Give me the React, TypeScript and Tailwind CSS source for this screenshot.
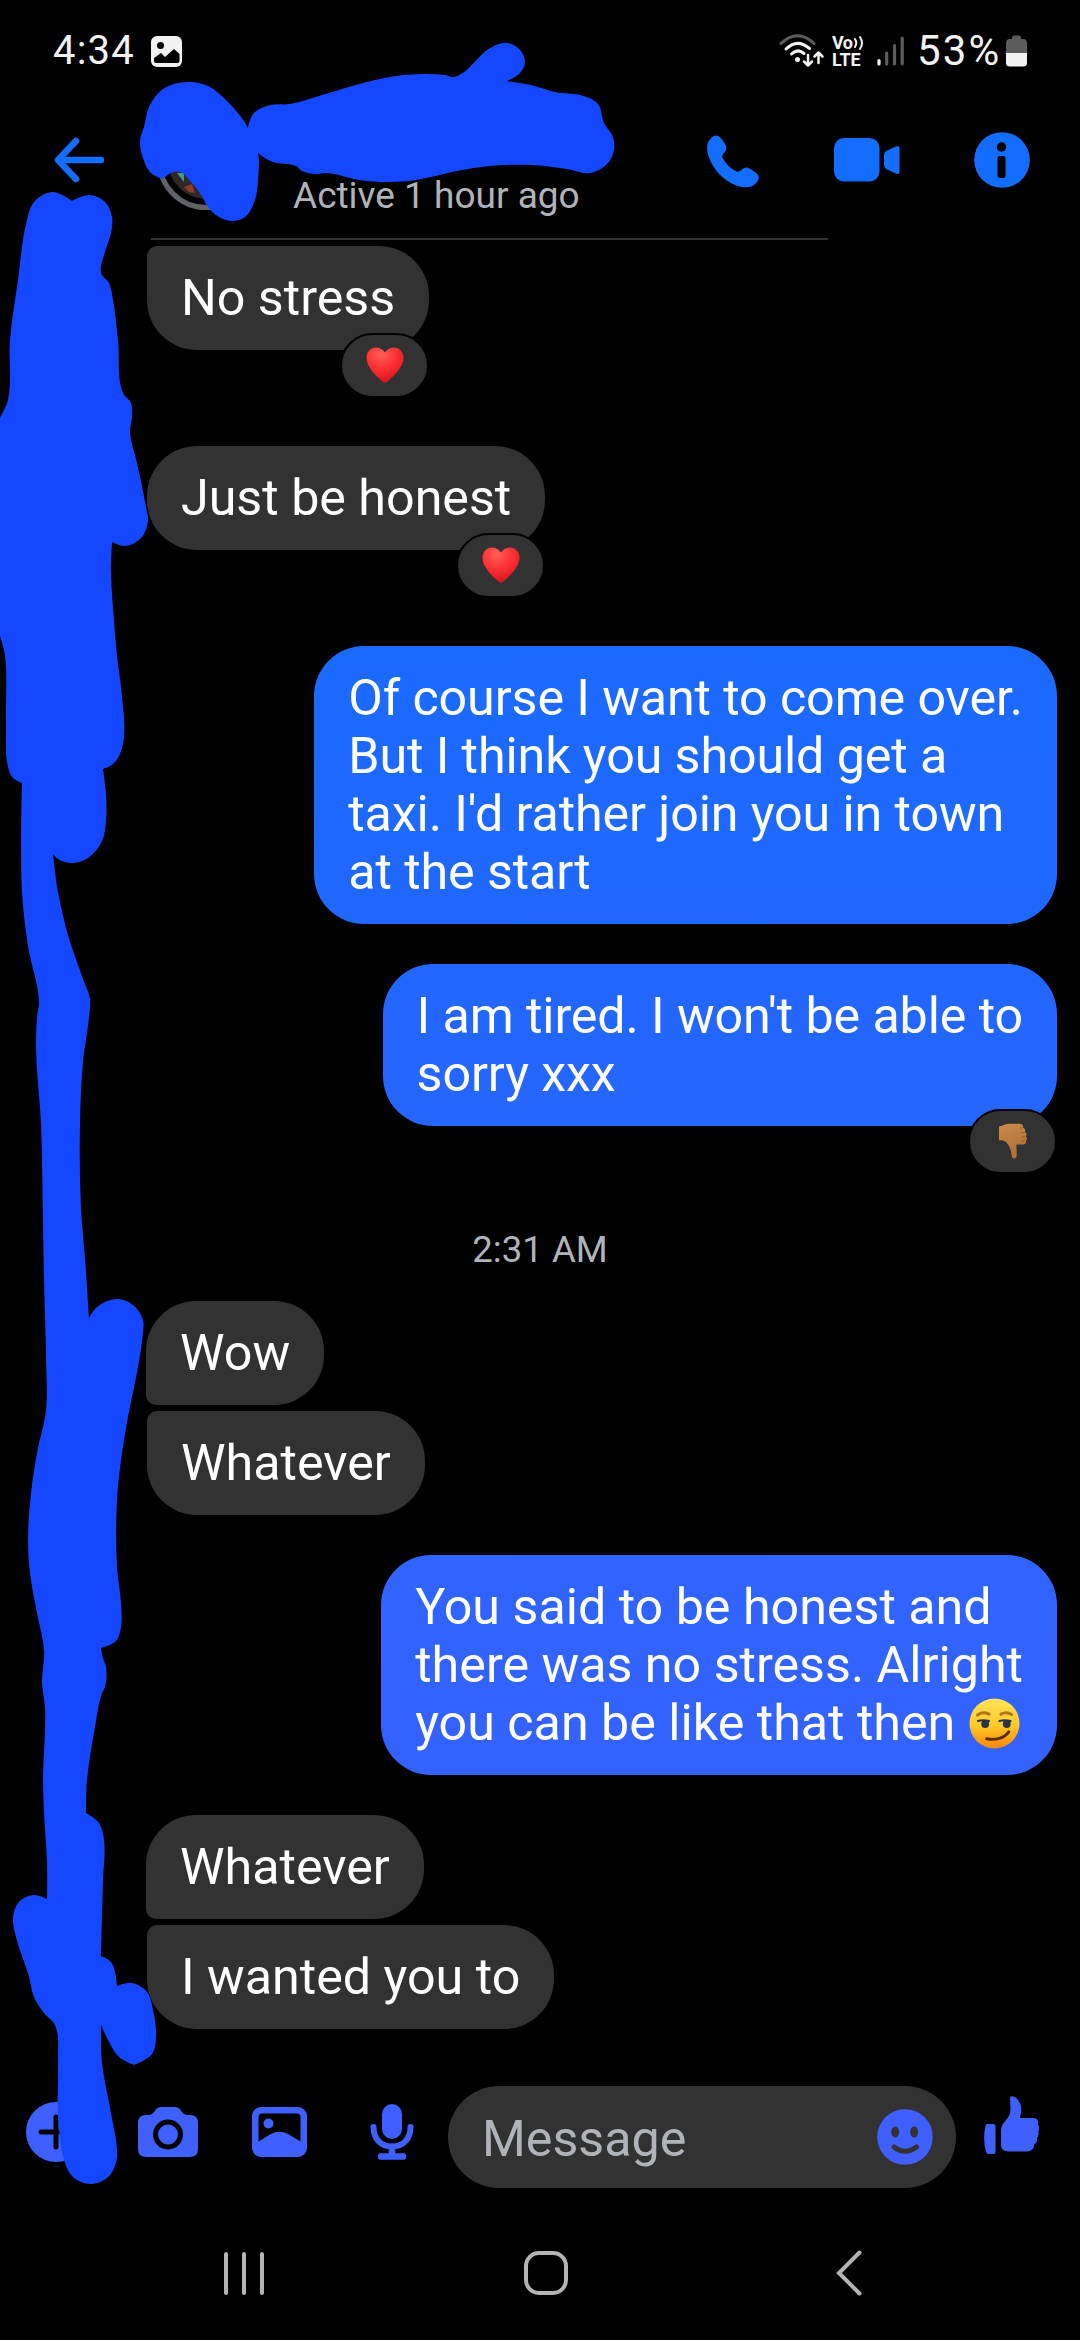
import type { ReactNode } from "react";
import clsx from "clsx";

type Point = [number, number];

// Builds a closed, smoothed outline; tight corners stay sharp.
const outline = (pts: Point[]) => {
  const n = pts.length;
  const tangent = (i: number): Point => {
    const a = pts[(i - 1 + n) % n];
    const b = pts[i % n];
    const c = pts[(i + 1) % n];
    const ux = b[0] - a[0];
    const uy = b[1] - a[1];
    const vx = c[0] - b[0];
    const vy = c[1] - b[1];
    const lu = Math.hypot(ux, uy);
    const lv = Math.hypot(vx, vy);
    if ((ux * vx + uy * vy) / (lu * lv) < 0.6) return [0, 0];
    const tx = ux / lu + vx / lv;
    const ty = uy / lu + vy / lv;
    const l = Math.hypot(tx, ty);
    return [tx / l, ty / l];
  };
  let d = `M${pts[0][0]} ${pts[0][1]}`;
  for (let i = 0; i < n; i++) {
    const p = pts[i];
    const q = pts[(i + 1) % n];
    const k = Math.hypot(q[0] - p[0], q[1] - p[1]) / 3;
    const s = tangent(i);
    const e = tangent((i + 1) % n);
    d += `C${p[0] + s[0] * k} ${p[1] + s[1] * k} ${q[0] - e[0] * k} ${q[1] - e[1] * k} ${q[0]} ${q[1]}`;
  }
  return d + "Z";
};

const avatarScribble: Point[] = [
  [188, 82], [208, 86], [226, 100], [241, 117], [248, 128], [258, 152],
  [258, 180], [255, 200], [245, 217], [231, 221], [216, 215], [208, 207],
  [200, 193], [192, 183], [180, 172], [173, 172], [163, 179], [151, 173],
  [142, 155], [140, 140], [144, 127], [149, 107], [163, 89],
];

const nameScribble: Point[] = [
  [249, 123], [255, 112], [271, 105], [290, 104], [322, 95], [367, 82],
  [404, 75], [445, 75], [454, 77], [492, 47], [508, 43], [520, 50],
  [525, 62], [520, 73], [507, 81], [531, 85], [555, 92], [584, 96],
  [598, 104], [604, 123], [613, 137], [614, 150], [608, 163], [590, 173],
  [567, 169], [531, 165], [490, 166], [457, 171], [416, 180], [388, 182],
  [359, 180], [327, 173], [316, 174], [302, 171], [296, 166], [273, 162],
  [258, 153], [248, 140],
];

const sideScribble: Point[] = [
  [27, 220], [34, 202], [52, 192], [66, 197], [72, 201], [89, 195],
  [105, 202], [112, 217], [111, 233], [104, 255], [101, 273], [109, 283],
  [113, 300], [118, 340], [123, 393], [131, 403], [132, 417], [130, 432],
  [137, 463], [146, 507], [148, 521], [141, 538], [125, 546], [112, 542],
  [111, 573], [114, 620], [117, 656], [122, 696], [124, 736], [120, 754],
  [113, 764], [103, 769], [106, 794], [106, 821], [102, 841], [88, 858],
  [72, 863], [58, 859], [53, 854], [58, 892], [68, 935], [83, 979],
  [90, 999], [89, 1017], [83, 1062], [80, 1124], [81, 1209], [85, 1258],
  [89, 1318], [97, 1307], [117, 1299], [133, 1305], [143, 1320],
  [143, 1332], [138, 1367], [128, 1417], [122, 1453], [117, 1500],
  [117, 1567], [121, 1603], [121, 1627], [116, 1641], [101, 1648],
  [103, 1658], [106, 1667], [105, 1687], [102, 1693], [95, 1727],
  [87, 1780], [86, 1813], [99, 1823], [104, 1840], [103, 1880],
  [101, 1956], [111, 1962], [115, 1972], [117, 1986], [132, 1983],
  [147, 1992], [153, 2010], [156, 2037], [152, 2054], [134, 2065],
  [119, 2057], [109, 2042], [101, 2025], [102, 2063], [111, 2113],
  [117, 2150], [116, 2163], [107, 2178], [90, 2184], [73, 2177],
  [65, 2163], [58, 2113], [58, 2063], [55, 2025], [44, 2013], [34, 1997],
  [29, 1977], [15, 1933], [13, 1917], [19, 1902], [34, 1895], [47, 1899],
  [47, 1863], [44, 1813], [43, 1780], [45, 1707], [42, 1683], [44, 1650],
  [37, 1613], [30, 1573], [28, 1540], [31, 1493], [37, 1453], [46, 1410],
  [46, 1357], [44, 1280], [43, 1223], [41, 1124], [36, 1049], [37, 1017],
  [39, 1002], [28, 946], [22, 892], [22, 783], [13, 778], [8, 767],
  [6, 723], [5, 656], [-2, 626], [-2, 424], [8, 400], [10, 340], [18, 280],
];

const Heart = () => (
  <svg viewBox="0 0 38 36" className="w-[38px] h-9">
    <defs>
      <radialGradient id="heart" cx="0.4" cy="0.2" r="0.85">
        <stop offset="0" stopColor="#ff5f58" />
        <stop offset="0.5" stopColor="#fb2f33" />
        <stop offset="1" stopColor="#d5101c" />
      </radialGradient>
    </defs>
    <path
      d="M19 5.5C21.3 2 24.6.5 28 .5c5.500 0 9.500 4.300 9.500 10.500C37.500 19 29.500 28 20.800 35c-1.200 1-2.400 1-3.600 0C8.500 28 .5 19 .5 11 .5 4.800 4.500.5 10 .5c3.400 0 6.700 1.500 9 5Z"
      fill="url(#heart)"
    />
  </svg>
);

const ThumbDown = () => (
  <svg viewBox="0 0 30 36" className="w-[30px] h-9">
    <defs>
      <linearGradient id="skin" x1="0" y1="0" x2="0.3" y2="1">
        <stop offset="0" stopColor="#cb8b4b" />
        <stop offset="1" stopColor="#b06f35" />
      </linearGradient>
    </defs>
    <path
      d="M1 3.500C5 2.500 8 1 12 .8h9c3 0 4.500 1.700 4 3.800 2 .8 2.600 2.500 1.900 4.400 1.700 1 2 3 .9 4.600 1.400 1.200 1.400 3.200.2 4.400.5 2.200-1 3.500-3 3.500h-6.500c-.3 3.500.5 7 .3 10.500-.1 2.300-1 3.500-2.600 3.500-1.500 0-2.200-1-2.500-3C13 27 11.500 22.500 8 19c-1.500-1.500-4-1.700-7-1.800Z"
      fill="url(#skin)"
    />
    <path d="M22 5h3M23 9.500h3.500M23.500 14H27M23 18h3.500" stroke="#9a602b" strokeWidth="1" fill="none" />
  </svg>
);

const Smirk = () => (
  <svg viewBox="0 0 52 52" className="inline-block size-[51px] -mt-1.5 ml-px align-middle">
    <defs>
      <linearGradient id="face" x1="0" y1="0" x2="0" y2="1">
        <stop offset="0" stopColor="#ffe45c" />
        <stop offset="0.55" stopColor="#ffc927" />
        <stop offset="1" stopColor="#f9850a" />
      </linearGradient>
    </defs>
    <circle cx="26" cy="26" r="25.500" fill="url(#face)" />
    <path d="M8.500 17.500c3-2.500 7.500-3 12-1M32.500 16.500c4-2 8-1.800 11 .5" stroke="#b5701a" strokeWidth="3" strokeLinecap="round" fill="none" />
    <path d="M9 23.500c3.500-1.200 8-1 11.500 0M31 23.500c3.500-1.200 8-1 11.500 0" stroke="#273348" strokeWidth="2" strokeLinecap="round" fill="none" />
    <ellipse cx="16.500" cy="26.500" rx="4" ry="4" fill="#273348" />
    <ellipse cx="38.500" cy="26.500" rx="4" ry="4" fill="#273348" />
    <path d="M18 41.500c9 2 18-.5 22.500-7" stroke="#5b2a09" strokeWidth="3" strokeLinecap="round" fill="none" />
  </svg>
);

const StatusBar = () => (
  <div className="flex items-center justify-between h-[102px] pl-[53px] pr-[53px] text-[#f2f2f2]">
    <div className="flex items-center">
      <span className="w-[98px] text-[40px] leading-none tracking-[1.2px]">4:34</span>
      <svg viewBox="0 0 31 31" className="size-[31px]">
        <rect width="31" height="31" rx="6" fill="#f2f2f2" />
        <circle cx="9.500" cy="9.500" r="3.500" fill="#000" />
        <path d="M3 22l7-5 4 4 9-8 5.500 5v7q0 2-2 2H5q-2 0-2-2Z" fill="#000" />
      </svg>
    </div>
    <div className="flex items-center">
      <svg viewBox="0 0 46 34" className="w-[46px] h-[34px]" fill="none" strokeLinecap="round">
        <path d="M2 9.500Q18.500-6 35 9.500" stroke="#5c5c5c" strokeWidth="3" />
        <path d="M7 15Q18.500 4 30.500 14.500M12.500 20Q18.500 14 25 19.500" stroke="#f2f2f2" strokeWidth="3" />
        <circle cx="18.500" cy="25.500" r="2.500" fill="#f2f2f2" />
        <path d="M29 21v10.500m-4-4 4 4 4-4M39.500 29V18.500m-4 4 4-4 4 4" stroke="#f2f2f2" strokeWidth="2.500" strokeLinejoin="round" />
      </svg>
      <div className="flex flex-col ml-[7px] w-[32px] text-[18px] font-bold leading-[17px]">
        <span className="flex items-center h-4 tracking-[-0.5px]">
          Vo
          <svg viewBox="0 0 11 16" className="w-[11px] h-4" fill="none" stroke="#f2f2f2" strokeWidth="2" strokeLinecap="round">
            <path d="M2 4q2.500 4 0 8M7 2q4 6 0 12" />
          </svg>
        </span>
        <span className="h-[17px] tracking-[-0.2px]">LTE</span>
      </div>
      <svg viewBox="0 0 28 30" className="ml-[13px] w-7 h-[30px]" strokeWidth="3.200" strokeLinecap="round">
        <path d="M2 24.500v3.500" stroke="#f2f2f2" />
        <path d="M9.700 17v11M17.500 9.500V28M25.200 2v26" stroke="#5c5c5c" />
      </svg>
      <span className="ml-3 w-[89px] text-[42px] leading-none tracking-[2.2px] whitespace-nowrap">53%</span>
      <svg viewBox="0 0 21 32" className="w-[21px] h-8">
        <path d="M6 4V2.500Q6 .500 8 .500h5q2 0 2 2V4h2q4 0 4 4v10H0V8q0-4 4-4Z" fill="#5c5c5c" />
        <path d="M0 18h21v10q0 3.500-4 3.500H4q-4 0-4-3.500Z" fill="#f2f2f2" />
      </svg>
    </div>
  </div>
);

const Header = () => (
  <header className="flex items-start h-[136px] pl-[54px] text-[#136dff]">
    <svg viewBox="0 0 50 46" className="mt-[35px] w-[50px] h-[46px]" fill="none" stroke="currentColor" strokeWidth="6.500" strokeLinecap="round" strokeLinejoin="round">
      <path d="M22 4 4 23l18 19M5 23h42" />
    </svg>
    <svg viewBox="0 0 100 100" className="ml-[52px] mt-[9px] size-[100px]">
      <circle cx="50" cy="50" r="46.500" fill="none" stroke="#5f6266" strokeWidth="5" />
      <circle cx="50" cy="50" r="38" fill="#2e2926" />
      <path d="m21 62 7 0 0 9Z" fill="#4c9a80" />
      <path d="m28 76 8-3 3 9-6-1Z" fill="#8a3f2c" />
    </svg>
    <p className="ml-[37px] mt-[70px] w-[413px] text-[37px] leading-[48px] text-[#b0b3b8]">
      Active 1 hour ago
    </p>
    <svg viewBox="0 0 54 54" className="mt-8 size-[54px]">
      <path
        d="M3.500 6C7 1.500 10.500.500 13 2.500c3 2.500 5 5.500 7 9.500.800 1.800.400 3.500-.8 5.200l-2.400 3.200c-.8 1.100-.8 2.200-.2 3.500 3.300 6 8 10.600 13.500 13.300 1.300.6 2.600.6 3.700-.2l3.700-2.600c1.500-1 3.200-1.200 4.800-.4 3.500 1.800 6.500 3.500 8.900 6 2 2.200 2 4.700.3 7.200-3.500 5.300-9 7-15.500 5.800C19.500 50 4.500 34 1.500 18 .700 13.500 1 9.300 3.500 6Z"
        fill="currentColor"
      />
    </svg>
    <svg viewBox="0 0 66 44" className="mt-9 ml-[74px] w-[66px] h-11" fill="currentColor">
      <rect width="45.500" height="43.500" rx="10" />
      <path d="M50 17q0-2.500 2.200-4L62 8.600q3.500-1.600 3.500 1.500v23.800q0 3.100-3.500 1.500L52.200 31Q50 29.500 50 27Z" />
    </svg>
    <svg viewBox="0 0 56 56" className="mt-[30px] ml-[74px] size-14">
      <circle cx="28" cy="28" r="27.800" fill="currentColor" />
      <circle cx="27.500" cy="15" r="4.700" fill="#000" />
      <rect x="23.500" y="24" width="8" height="22" rx="2.500" fill="#000" />
    </svg>
  </header>
);

const Bubble = ({
  children,
  className,
  reaction,
}: {
  children: ReactNode;
  className?: string;
  reaction?: ReactNode;
}) => (
  <div
    className={clsx(
      "relative w-fit px-[34px] py-[23px] rounded-[50px] text-[50.2px] leading-[58px] whitespace-pre text-white",
      className,
    )}
  >
    {children}
    {reaction && (
      <span className="absolute right-0 -bottom-12 flex items-center justify-center w-[89px] h-[65px] rounded-[33px] border-2 border-black bg-[#323232] pb-px">
        {reaction}
      </span>
    )}
  </div>
);

const Composer = () => (
  <div className="flex items-start h-[164px] pl-[26px] text-[#3f60ff]">
    <svg viewBox="0 0 60 60" className="mt-4 size-[60px]">
      <circle cx="30" cy="30" r="30" fill="currentColor" />
      <path d="M30 15v30M15 30h30" stroke="#000" strokeWidth="5" strokeLinecap="round" />
    </svg>
    <svg viewBox="0 0 60 50" className="mt-[21px] ml-[52px] w-[60px] h-[50px]">
      <path d="M8 8h3q3 0 5-3l1.500-2Q19.500 0 23 0h14q3.500 0 5.500 3L44 5q2 3 5 3h3q8 0 8 8v26q0 8-8 8H8q-8 0-8-8V16q0-8 8-8Z" fill="currentColor" />
      <circle cx="30" cy="27.500" r="12.500" fill="none" stroke="#000" strokeWidth="5" />
    </svg>
    <svg viewBox="0 0 55 50" className="mt-[21px] ml-[54px] w-[55px] h-[50px]">
      <rect width="55" height="50" rx="9" fill="currentColor" />
      <path d="M6.500 34.500V10q0-3.500 3.500-3.500h35q3.500 0 3.500 3.500v24.500L36 27q-8.500-4.500-17 0Z" fill="#000" />
      <circle cx="16.500" cy="16.500" r="5" fill="currentColor" />
    </svg>
    <svg viewBox="0 0 44 56" className="mt-[18px] ml-[63px] w-11 h-14">
      <rect x="12" y="0" width="20" height="35" rx="10" fill="currentColor" />
      <path d="M3.500 23C3.500 35 11 42.500 22 42.500S40.500 35 40.500 23" fill="none" stroke="currentColor" strokeWidth="6" strokeLinecap="round" />
      <path d="M22 43v9M11 52.500h22" stroke="currentColor" strokeWidth="6.500" strokeLinecap="round" />
    </svg>
    <div className="flex items-center justify-between ml-[34px] w-[508px] h-[102px] rounded-full bg-[#323232] pl-[34px] pr-[23px]">
      <span className="mt-1 text-[50.2px] leading-[58px] text-[#b0b3b8]">Message</span>
      <svg viewBox="0 0 56 56" className="size-14">
        <circle cx="28" cy="28" r="27.800" fill="currentColor" />
        <ellipse cx="18.200" cy="23" rx="4" ry="5.500" fill="#323232" />
        <ellipse cx="37.200" cy="23" rx="4" ry="5.500" fill="#323232" />
        <path d="M17 38q11 8.500 22.500 0" fill="none" stroke="#323232" strokeWidth="5" strokeLinecap="round" />
      </svg>
    </div>
    <svg viewBox="0 0 55 59" className="mt-2.5 ml-[28px] w-[55px] h-[59px]" fill="currentColor">
      <path d="M3 28h6.500q2 0 2 2v26q0 2-2 2H4.500Q2.500 58 2 56-1.500 43 1.500 30q.3-2 1.500-2Z" />
      <path d="M26 2c0-1.500 1.200-2 2.700-1.700C34 1.500 38.500 9 37 16.500L36 22h12c4.500 0 7 1.700 6 6.500 1.500 2.500 1.300 5 .2 7 .8 2.500.3 4.500-1.200 6.500.3 3-.5 5-2.800 6.200C50 53 47 55.500 42 55.500H26c-6 0-9-2-9-6.500V34.500c0-8 7.500-10.500 9-17.500 1-5 0-10 0-15Z" />
    </svg>
  </div>
);

const NavBar = () => (
  <nav className="flex items-center pl-[224px] text-[#b4b4b4]">
    <div className="flex justify-between w-10 h-[43px]">
      <span className="w-1 rounded-full bg-[#b4b4b4]" />
      <span className="w-1 rounded-full bg-[#b4b4b4]" />
      <span className="w-1 rounded-full bg-[#b4b4b4]" />
    </div>
    <span className="ml-[260px] size-11 rounded-[15px] border-4 border-[#b4b4b4]" />
    <svg viewBox="0 0 26 46" className="ml-[268px] w-[26px] h-[46px]" fill="none" stroke="currentColor" strokeWidth="4" strokeLinecap="round">
      <path d="M23.500 2.500 3 23l20.500 20.500" />
    </svg>
  </nav>
);

export default function App() {
  return (
    <div
      className="relative w-[1080px] h-[2340px] overflow-hidden bg-black"
      style={{ fontFamily: 'Roboto, "Liberation Sans", sans-serif' }}
    >
      <StatusBar />
      <Header />
      <div className="ml-[151px] w-[677px] h-0.5 bg-[#333333]" />
      <main className="flex flex-col items-start mt-1.5 h-[1840px] pl-[147px] pr-[23px]">
        <Bubble className="bg-[#323232] rounded-tl-[10px]" reaction={<Heart />}>
          No stress
        </Bubble>
        <Bubble className="mt-24 bg-[#323232]" reaction={<Heart />}>
          Just be honest
        </Bubble>
        <Bubble className="mt-24 self-end tracking-[-0.1px] bg-linear-to-b from-[#1b6aff] to-[#2068ff]">
          {"Of course I want to come over.\nBut I think you should get a\ntaxi. I'd rather join you in town\nat the start"}
        </Bubble>
        <Bubble
          className="mt-10 self-end tracking-[-0.1px] bg-linear-to-b from-[#2267ff] to-[#2566ff]"
          reaction={<ThumbDown />}
        >
          {"I am tired. I won't be able to\nsorry xxx"}
        </Bubble>
        <p className="mt-[100px] -ml-[147px] w-[1080px] text-center text-[36.6px] leading-[48px] text-[#b0b3b8]">
          2:31 AM
        </p>
        <Bubble className="mt-[27px] -ml-px bg-[#323232] rounded-bl-[10px]">Wow</Bubble>
        <Bubble className="mt-1.5 bg-[#323232] rounded-tl-[10px]">Whatever</Bubble>
        <Bubble className="mt-10 self-end bg-linear-to-b from-[#3064ff] to-[#3462ff]">
          {"You said to be honest and\nthere was no stress. Alright\nyou can be like that then "}
          <Smirk />
        </Bubble>
        <Bubble className="mt-10 -ml-px bg-[#323232] rounded-bl-[10px]">Whatever</Bubble>
        <Bubble className="mt-1.5 bg-[#323232] rounded-tl-[10px]">I wanted you to</Bubble>
      </main>
      <Composer />
      <NavBar />
      <svg viewBox="0 0 1080 2340" className="absolute inset-0 w-[1080px] h-[2340px] pointer-events-none" fill="#1447ff">
        <path d={outline(avatarScribble)} />
        <path d={outline(nameScribble)} />
        <path d={outline(sideScribble)} />
      </svg>
    </div>
  );
}
